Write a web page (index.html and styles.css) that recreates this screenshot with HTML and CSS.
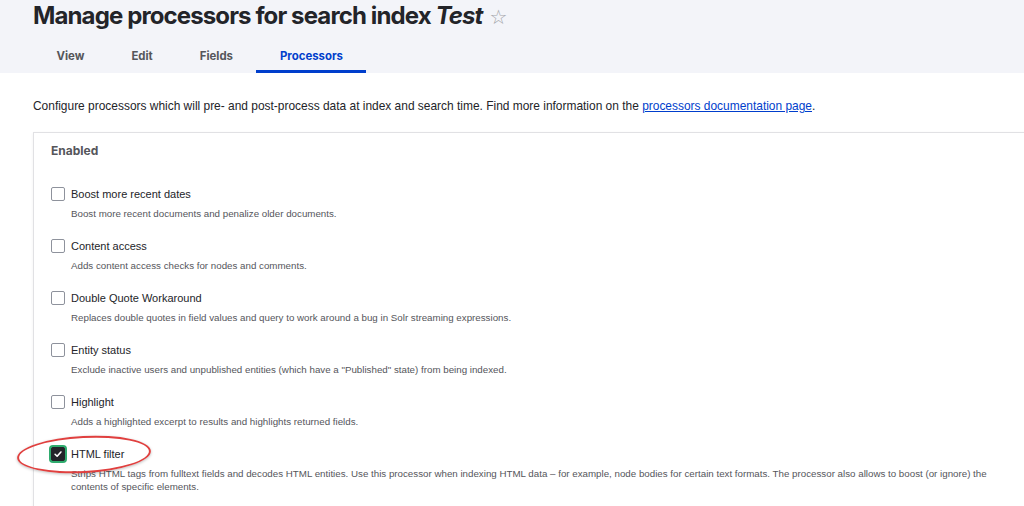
FILE: index.html
```html
<!DOCTYPE html>
<html lang="en">
<head>
<meta charset="utf-8">
<title>Manage processors</title>
<link rel="stylesheet" href="styles.css">
</head>
<body>
<header class="page-header">
  <h1 class="page-title">Manage processors for search index <em>Test</em> <span class="star">☆</span></h1>
  <nav class="tabs">
    <a class="tab">View</a>
    <a class="tab">Edit</a>
    <a class="tab">Fields</a>
    <a class="tab active">Processors</a>
  </nav>
</header>
<main class="content">
  <p class="intro">Configure processors which will pre- and post-process data at index and search time. Find more information on the <a class="link">processors documentation page</a>.</p>
  <section class="card">
    <h2 class="card-title">Enabled</h2>
    <ul class="items">
      <li class="item">
        <label class="item-label"><span class="box"></span>Boost more recent dates</label>
        <p class="item-desc">Boost more recent documents and penalize older documents.</p>
      </li>
      <li class="item">
        <label class="item-label"><span class="box"></span>Content access</label>
        <p class="item-desc">Adds content access checks for nodes and comments.</p>
      </li>
      <li class="item">
        <label class="item-label"><span class="box"></span>Double Quote Workaround</label>
        <p class="item-desc">Replaces double quotes in field values and query to work around a bug in Solr streaming expressions.</p>
      </li>
      <li class="item">
        <label class="item-label"><span class="box"></span>Entity status</label>
        <p class="item-desc">Exclude inactive users and unpublished entities (which have a "Published" state) from being indexed.</p>
      </li>
      <li class="item">
        <label class="item-label"><span class="box"></span>Highlight</label>
        <p class="item-desc">Adds a highlighted excerpt to results and highlights returned fields.</p>
      </li>
      <li class="item">
        <label class="item-label highlighted"><span class="box checked"><svg viewBox="0 0 14 14" width="14" height="14"><path d="M3.6 7.3 L6 9.6 L10.4 4.6" fill="none" stroke="#fff" stroke-width="1.8" stroke-linecap="round" stroke-linejoin="round"/></svg></span>HTML filter<span class="annotation"></span></label>
        <p class="item-desc">Strips HTML tags from fulltext fields and decodes HTML entities. Use this processor when indexing HTML data – for example, node bodies for certain text formats. The processor also allows to boost (or ignore) the contents of specific elements.</p>
      </li>
    </ul>
  </section>
</main>
</body>
</html>
```

FILE: styles.css
```css
* { box-sizing: border-box; }
html, body { margin: 0; padding: 0; }
body {
  font-family: "Inter", "Liberation Sans", sans-serif;
  color: #232429;
  background: #fff;
  width: 1024px;
  height: 506px;
  overflow: hidden;
}
.page-header {
  background: #f3f4f9;
  padding: 0 0 0 33px;
  height: 73px;
  display: flex;
  flex-direction: column;
}
.page-title {
  margin: 0;
  font-size: 24px;
  line-height: 30px;
  font-weight: 700;
  letter-spacing: -0.88px;
  color: #232429;
  margin-top: 1px;
}
.page-title em { font-style: italic; }
.star {
  font-family: "DejaVu Sans", sans-serif;
  font-weight: 400;
  color: #a4a5aa;
  font-size: 20px;
  letter-spacing: 0;
  margin-left: 2px;
}
.tabs {
  display: flex;
  margin-top: auto;
}
.tab {
  display: block;
  font-size: 11.4px;
  line-height: 16px;
  font-weight: 700;
  color: #55565b;
  padding: 0 23.5px 6px;
  border-bottom: 3px solid transparent;
  text-decoration: none;
}
.tab.active {
  color: #003ecc;
  border-bottom-color: #003ecc;
}
.content { padding: 0 0 0 33px; }
.intro {
  margin: 25px 0 0;
  font-family: "Liberation Sans", sans-serif;
  font-size: 11.95px;
  line-height: 17px;
  color: #232429;
}
.link { color: #003ecc; text-decoration: underline; }
.card {
  margin-top: 17px;
  width: 1030px;
  height: 380px;
  border: 1px solid #e1e1e4;
  border-right: none;
  border-bottom: none;
  box-shadow: 0 1px 3px rgba(0,0,0,0.06);
  padding: 10px 0 0 17px;
}
.card-title {
  margin: 0;
  font-size: 12px;
  line-height: 16px;
  font-weight: 700;
  color: #55565b;
}
.items { list-style: none; margin: 27px 0 0; padding: 0; }
.item { height: 52px; }
.item:last-child { height: auto; }
.item-label {
  position: relative;
  display: flex;
  align-items: center;
  gap: 6px;
  font-family: "Liberation Sans", sans-serif;
  font-size: 11px;
  line-height: 16px;
  color: #232429;
}
.box {
  width: 14px;
  height: 14px;
  border: 1px solid #8e929c;
  border-radius: 2px;
  background: #fff;
  display: flex;
  align-items: center;
  justify-content: center;
}
.box.checked {
  background: #232429;
  border-color: #232429;
  box-shadow: 0 0 0 2px #2fab6e;
}
.item-desc {
  margin: 5px 0 0 20px;
  font-family: "Liberation Sans", sans-serif;
  font-size: 9.75px;
  line-height: 13px;
  color: #55565b;
  max-width: 930px;
}
.annotation {
  position: absolute;
  left: -34px;
  top: -10px;
  width: 134px;
  height: 37px;
  border: 2px solid #e0403f;
  border-radius: 50%;
  box-shadow: 0 1px 3px rgba(0,0,0,0.25);
  pointer-events: none;
  transform: rotate(-3deg);
}
```
